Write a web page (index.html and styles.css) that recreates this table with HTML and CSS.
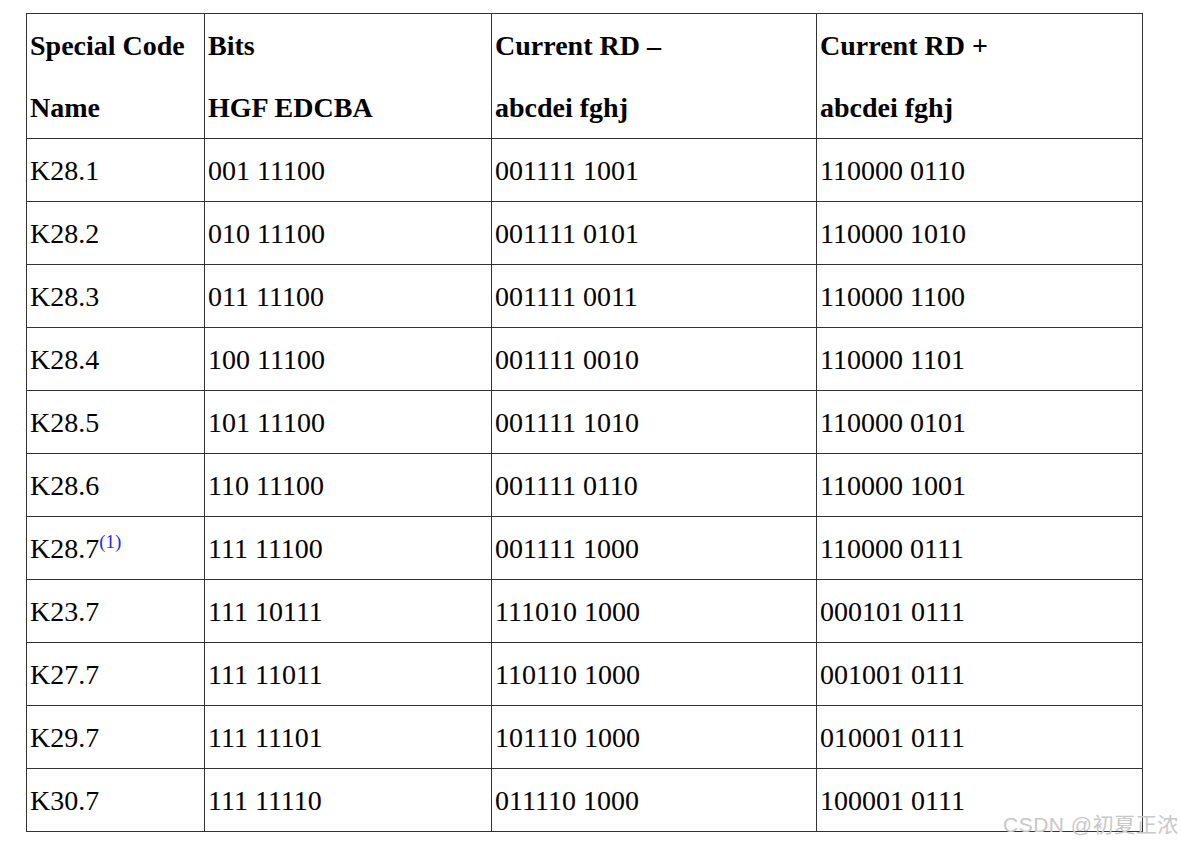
FILE: index.html
```html
<!DOCTYPE html>
<html>
<head>
<meta charset="utf-8">
<link rel="stylesheet" href="styles.css">
</head>
<body>
<table class="codes">
  <colgroup>
    <col class="c1"><col class="c2"><col class="c3"><col class="c4">
  </colgroup>
  <thead>
    <tr>
      <th><div>Special Code</div><div>Name</div></th>
      <th><div>Bits</div><div>HGF EDCBA</div></th>
      <th><div>Current RD –</div><div>abcdei fghj</div></th>
      <th><div>Current RD +</div><div>abcdei fghj</div></th>
    </tr>
  </thead>
  <tbody>
    <tr><td>K28.1</td><td>001 11100</td><td>001111 1001</td><td>110000 0110</td></tr>
    <tr><td>K28.2</td><td>010 11100</td><td>001111 0101</td><td>110000 1010</td></tr>
    <tr><td>K28.3</td><td>011 11100</td><td>001111 0011</td><td>110000 1100</td></tr>
    <tr><td>K28.4</td><td>100 11100</td><td>001111 0010</td><td>110000 1101</td></tr>
    <tr><td>K28.5</td><td>101 11100</td><td>001111 1010</td><td>110000 0101</td></tr>
    <tr><td>K28.6</td><td>110 11100</td><td>001111 0110</td><td>110000 1001</td></tr>
    <tr><td>K28.7<sup class="note">(1)</sup></td><td>111 11100</td><td>001111 1000</td><td>110000 0111</td></tr>
    <tr><td>K23.7</td><td>111 10111</td><td>111010 1000</td><td>000101 0111</td></tr>
    <tr><td>K27.7</td><td>111 11011</td><td>110110 1000</td><td>001001 0111</td></tr>
    <tr><td>K29.7</td><td>111 11101</td><td>101110 1000</td><td>010001 0111</td></tr>
    <tr><td>K30.7</td><td>111 11110</td><td>011110 1000</td><td>100001 0111</td></tr>
  </tbody>
</table>
<div class="watermark">CSDN @初夏正浓</div>
</body>
</html>
```
FILE: styles.css
```css
html, body {
  margin: 0;
  padding: 0;
  background: #ffffff;
}
body {
  padding: 13px 0 0 26px;
  font-family: "Liberation Serif", "Times New Roman", serif;
  color: #000;
  position: relative;
  width: 1181px;
  height: 844px;
  box-sizing: border-box;
  overflow: hidden;
}
.codes {
  border-collapse: collapse;
  table-layout: fixed;
  width: 1116px;
  font-size: 28px;
}
.c1 { width: 178px; }
.c2 { width: 287px; }
.c3 { width: 325px; }
.c4 { width: 326px; }
.codes th, .codes td {
  border: 1px solid #333;
  padding: 0 0 0 3px;
  text-align: left;
  white-space: nowrap;
}
.codes th {
  font-weight: bold;
  vertical-align: top;
  height: 124px;
}
.codes th div {
  height: 62px;
  line-height: 64px;
}
.codes td {
  padding-top: 2px;
  line-height: 60px;
  vertical-align: top;
}
.note {
  color: #2a2ae8;
  font-size: 19px;
  line-height: 0;
  vertical-align: 10px;
}
.watermark {
  position: absolute;
  left: 1003px;
  top: 808px;
  font-family: "Liberation Sans", "Noto Sans CJK SC", sans-serif;
  font-size: 21px;
  letter-spacing: 0.5px;
  color: #c8c8c8;
  white-space: nowrap;
}
```
